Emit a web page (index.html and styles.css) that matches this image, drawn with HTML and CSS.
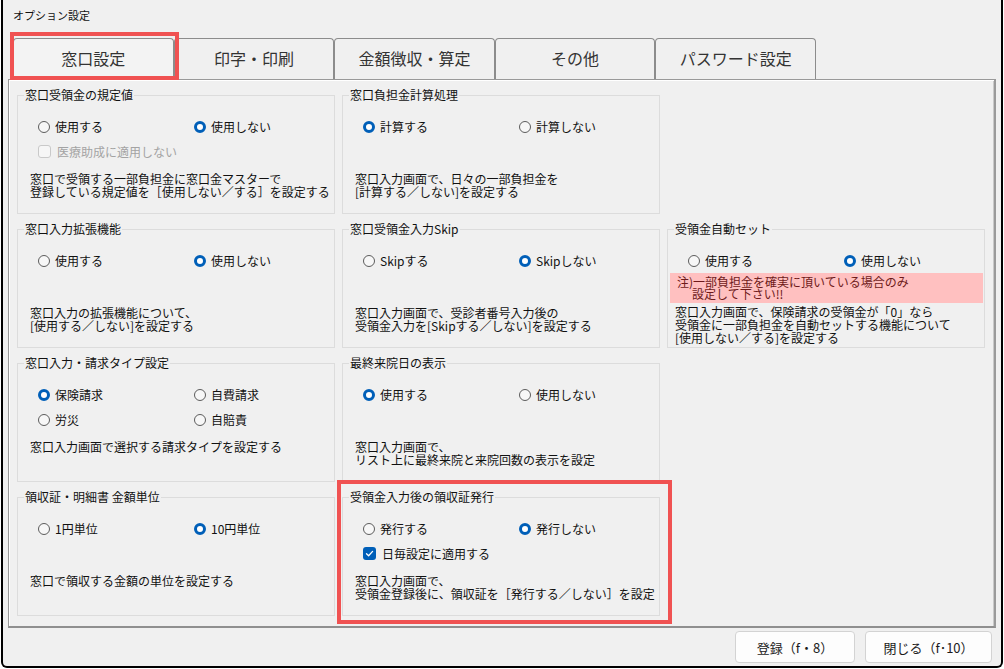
FILE: index.html
```html
<!DOCTYPE html>
<html lang="ja">
<head>
    <meta charset="UTF-8">
    <title>オプション設定</title>
    <link rel="stylesheet" href="styles.css">
</head>
<body>
    <div class="window">
        <div class="titlebar">オプション設定</div>

        <div class="tabs">
            <div class="tab active">窓口設定</div>
            <div class="tab">印字・印刷</div>
            <div class="tab">金額徴収・算定</div>
            <div class="tab">その他</div>
            <div class="tab">パスワード設定</div>
        </div>

        <div class="panel">
            <!-- 1段目 -->
            <div class="group">
                <div class="caption">窓口受領金の規定値</div>
                <div class="opts">
                    <label class="opt"><span class="radio"></span>使用する</label>
                    <label class="opt"><span class="radio on"></span>使用しない</label>
                    <label class="opt disabled"><span class="check"></span>医療助成に適用しない</label>
                </div>
                <div class="desc">窓口で受領する一部負担金に窓口金マスターで<br>登録している規定値を［使用しない／する］を設定する</div>
            </div>
            <div class="group">
                <div class="caption">窓口負担金計算処理</div>
                <div class="opts">
                    <label class="opt"><span class="radio on"></span>計算する</label>
                    <label class="opt"><span class="radio"></span>計算しない</label>
                </div>
                <div class="desc">窓口入力画面で、日々の一部負担金を<br>[計算する／しない]を設定する</div>
            </div>
            <div class="blank"></div>

            <!-- 2段目 -->
            <div class="group">
                <div class="caption">窓口入力拡張機能</div>
                <div class="opts">
                    <label class="opt"><span class="radio"></span>使用する</label>
                    <label class="opt"><span class="radio on"></span>使用しない</label>
                </div>
                <div class="desc">窓口入力の拡張機能について、<br>[使用する／しない]を設定する</div>
            </div>
            <div class="group">
                <div class="caption">窓口受領金入力Skip</div>
                <div class="opts">
                    <label class="opt"><span class="radio"></span>Skipする</label>
                    <label class="opt"><span class="radio on"></span>Skipしない</label>
                </div>
                <div class="desc">窓口入力画面で、受診者番号入力後の<br>受領金入力を[Skipする／しない]を設定する</div>
            </div>
            <div class="group">
                <div class="caption">受領金自動セット</div>
                <div class="opts single">
                    <label class="opt"><span class="radio"></span>使用する</label>
                    <label class="opt"><span class="radio on"></span>使用しない</label>
                </div>
                <div class="note">注)一部負担金を確実に頂いている場合のみ<br><span class="indent">設定して下さい!!</span></div>
                <div class="desc tight">窓口入力画面で、保険請求の受領金が「0」なら<br>受領金に一部負担金を自動セットする機能について<br>[使用しない／する]を設定する</div>
            </div>

            <!-- 3段目 -->
            <div class="group">
                <div class="caption">窓口入力・請求タイプ設定</div>
                <div class="opts">
                    <label class="opt"><span class="radio on"></span>保険請求</label>
                    <label class="opt"><span class="radio"></span>自費請求</label>
                    <label class="opt"><span class="radio"></span>労災</label>
                    <label class="opt"><span class="radio"></span>自賠責</label>
                </div>
                <div class="desc">窓口入力画面で選択する請求タイプを設定する</div>
            </div>
            <div class="group">
                <div class="caption">最終来院日の表示</div>
                <div class="opts">
                    <label class="opt"><span class="radio on"></span>使用する</label>
                    <label class="opt"><span class="radio"></span>使用しない</label>
                </div>
                <div class="desc">窓口入力画面で、<br>リスト上に最終来院と来院回数の表示を設定</div>
            </div>
            <div class="blank"></div>

            <!-- 4段目 -->
            <div class="group">
                <div class="caption">領収証・明細書 金額単位</div>
                <div class="opts">
                    <label class="opt"><span class="radio"></span>1円単位</label>
                    <label class="opt"><span class="radio on"></span>10円単位</label>
                </div>
                <div class="desc">窓口で領収する金額の単位を設定する</div>
            </div>
            <div class="group">
                <div class="caption">受領金入力後の領収証発行</div>
                <div class="opts">
                    <label class="opt"><span class="radio"></span>発行する</label>
                    <label class="opt"><span class="radio on"></span>発行しない</label>
                    <label class="opt"><span class="check on"><svg viewBox="0 0 13 13" width="13" height="13"><path d="M3.5 6.8 L5.6 8.8 L9.6 4.4" fill="none" stroke="#fff" stroke-width="1.3" stroke-linecap="round" stroke-linejoin="round"/></svg></span>日毎設定に適用する</label>
                </div>
                <div class="desc">窓口入力画面で、<br>受領金登録後に、領収証を［発行する／しない］を設定</div>
            </div>
            <div class="blank"></div>
        </div>

        <div class="footer">
            <button class="btn btn-save">登録（f・8）</button>
            <button class="btn btn-close">閉じる（f･10）</button>
        </div>

        <!-- 赤枠の注目表示 -->
        <div class="mark mark-tab"></div>
        <div class="mark mark-group"></div>
    </div>
</body>
</html>
```

FILE: styles.css
```css
/* オプション設定ダイアログ */
* {
    box-sizing: border-box;
}

body {
    margin: 0;
    padding: 0;
    background: #ffffff;
    font-family: "Noto Sans CJK JP", "Noto Sans", sans-serif;
    color: #111;
}

.window {
    position: relative;
    width: 1002px;
    height: 668px;
    margin-left: 1px;
    background: #f0f0f0;
    border: 2px solid #000;
    border-top: 0;
    border-radius: 0 0 6px 6px;
    display: flex;
    flex-direction: column;
}

.titlebar {
    height: 38px;
    padding: 8px 0 0 10px;
    font-size: 11px;
    line-height: 14px;
}

/* タブ */
.tabs {
    display: flex;
    height: 41px;
    padding-left: 10px;
}

.tab {
    width: 160.6px;
    height: 41px;
    border: 1px solid #8c8c8c;
    border-bottom: 0;
    border-radius: 4px 4px 0 0;
    background: #f0f0f0;
    display: flex;
    align-items: center;
    justify-content: center;
    font-size: 16px;
    color: #333;
    padding-bottom: 2px;
}

.tab.active {
    background: #f3f3f3;
}

/* タブの中身 */
.panel {
    height: 549px;
    margin: 0 5px;
    border: 1px solid #999;
    border-right: 2px solid #9a9a9a;
    border-bottom: 2px solid #8f8f8f;
    box-shadow: inset 1px 1px 0 #fff, inset -1px 0 0 #c9c9c9;
    padding: 15px 0 0 8px;
    display: grid;
    grid-template-columns: repeat(3, 318px);
    grid-auto-rows: 119px;
    column-gap: 7px;
    row-gap: 15px;
    align-content: start;
}

.group {
    border: 1px solid #dcdcdc;
    font-size: 12px;
}

.caption {
    display: table;
    margin: -8px 0 0 6px;
    padding: 0 1px;
    background: #f0f0f0;
    line-height: 14px;
}

.opts {
    display: grid;
    grid-template-columns: 156px auto;
    grid-auto-rows: 25px;
    height: 50px;
    margin-top: 12px;
    padding-left: 20px;
}

.opts.single {
    height: 25px;
}

.opt {
    display: flex;
    align-items: center;
    gap: 5px;
    line-height: 14px;
    white-space: nowrap;
}

.opt.disabled {
    color: #a3a3a3;
}

.radio {
    width: 12px;
    height: 12px;
    border-radius: 50%;
    border: 1px solid #5c5c5c;
    background: #f7f7f7;
    flex: none;
}

.radio.on {
    border: 3.5px solid #005fb8;
    background: #fff;
}

.check {
    width: 13px;
    height: 13px;
    border-radius: 3px;
    border: 1px solid #c9c9c9;
    background: #f6f6f6;
    flex: none;
    display: block;
    margin-right: 1px;
}

.check.on {
    border: 0;
    background: #005fb8;
}

.check svg {
    display: block;
}

.desc {
    margin-top: 8px;
    padding-left: 12px;
    line-height: 13px;
    white-space: nowrap;
}

.desc.tight {
    margin-top: 2px;
    padding-left: 7px;
}

.note {
    height: 30px;
    margin: 0 1px 0 2px;
    padding: 3px 0 0 7px;
    background: #ffc0c0;
    color: #6e1a1a;
    line-height: 12px;
    white-space: nowrap;
}

.note .indent {
    padding-left: 15px;
}

/* 下のボタン */
.footer {
    display: flex;
    justify-content: flex-end;
    gap: 10px;
    padding: 3px 9px 0 0;
}

.btn {
    height: 32px;
    border: 1px solid #d3d3d3;
    border-radius: 4px;
    background: #fdfdfd;
    font-family: "Noto Sans CJK JP", "Noto Sans", sans-serif;
    font-size: 13px;
    color: #1b1b1b;
    padding: 0;
}

.btn-save {
    width: 120px;
}

.btn-close {
    width: 127px;
}

/* 赤枠 */
.mark {
    position: absolute;
    border: 4px solid #f05252;
    pointer-events: none;
}

.mark-tab {
    left: 7px;
    top: 32px;
    width: 169px;
    height: 48px;
}

.mark-group {
    left: 334px;
    top: 480px;
    width: 335px;
    height: 144px;
}
```
